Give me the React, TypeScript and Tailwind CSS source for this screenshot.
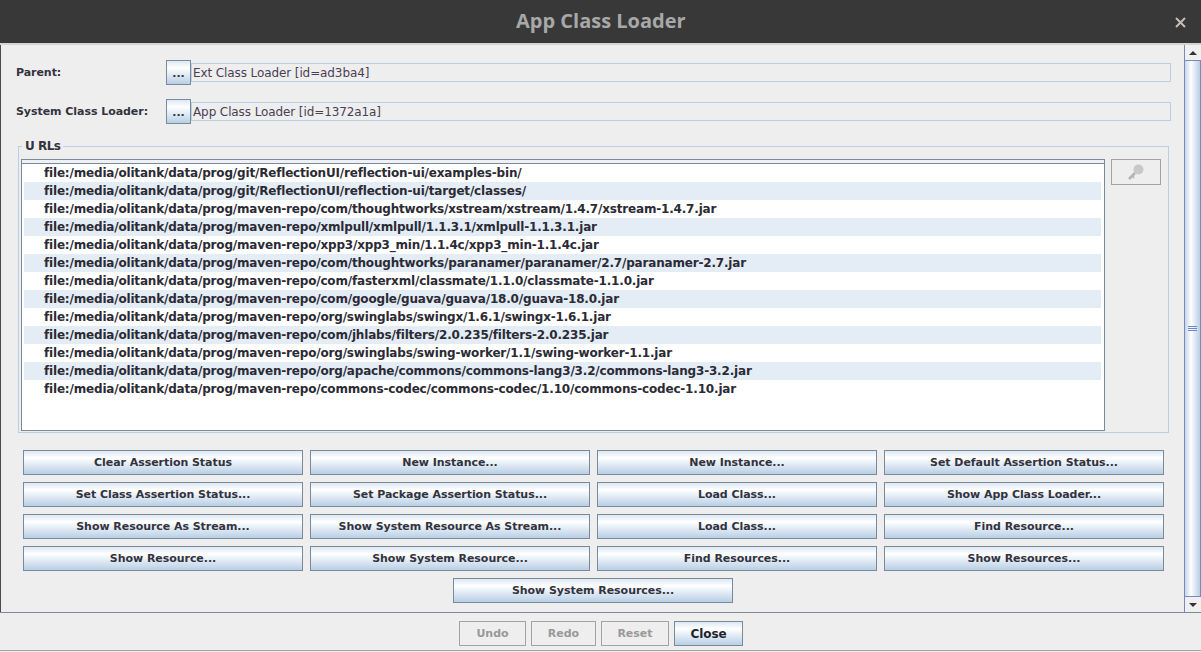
import React from "react";

const urls = [
  "file:/media/olitank/data/prog/git/ReflectionUI/reflection-ui/examples-bin/",
  "file:/media/olitank/data/prog/git/ReflectionUI/reflection-ui/target/classes/",
  "file:/media/olitank/data/prog/maven-repo/com/thoughtworks/xstream/xstream/1.4.7/xstream-1.4.7.jar",
  "file:/media/olitank/data/prog/maven-repo/xmlpull/xmlpull/1.1.3.1/xmlpull-1.1.3.1.jar",
  "file:/media/olitank/data/prog/maven-repo/xpp3/xpp3_min/1.1.4c/xpp3_min-1.1.4c.jar",
  "file:/media/olitank/data/prog/maven-repo/com/thoughtworks/paranamer/paranamer/2.7/paranamer-2.7.jar",
  "file:/media/olitank/data/prog/maven-repo/com/fasterxml/classmate/1.1.0/classmate-1.1.0.jar",
  "file:/media/olitank/data/prog/maven-repo/com/google/guava/guava/18.0/guava-18.0.jar",
  "file:/media/olitank/data/prog/maven-repo/org/swinglabs/swingx/1.6.1/swingx-1.6.1.jar",
  "file:/media/olitank/data/prog/maven-repo/com/jhlabs/filters/2.0.235/filters-2.0.235.jar",
  "file:/media/olitank/data/prog/maven-repo/org/swinglabs/swing-worker/1.1/swing-worker-1.1.jar",
  "file:/media/olitank/data/prog/maven-repo/org/apache/commons/commons-lang3/3.2/commons-lang3-3.2.jar",
  "file:/media/olitank/data/prog/maven-repo/commons-codec/commons-codec/1.10/commons-codec-1.10.jar",
];

const buttons = [
  "Clear Assertion Status", "New Instance...", "New Instance...", "Set Default Assertion Status...",
  "Set Class Assertion Status...", "Set Package Assertion Status...", "Load Class...", "Show App Class Loader...",
  "Show Resource As Stream...", "Show System Resource As Stream...", "Load Class...", "Find Resource...",
  "Show Resource...", "Show System Resource...", "Find Resources...", "Show Resources...",
];

function Btn({ label }: { label: string }) {
  return (
    <button className="h-[25px] w-[280px] border border-[#7a8a99] bg-gradient-to-b from-[#dde8f3] via-[#ffffff] via-[30%] to-[#b8cfe5] text-[11px] font-bold leading-none tracking-[-0.05px] text-[#333340]">
      {label}
    </button>
  );
}

function Row({ label, value }: { label: string; value: string }) {
  return (
    <div className="flex h-[25px] items-center">
      <div className="w-[165px] whitespace-nowrap pl-[15px] pt-[2px] text-[11px] font-bold tracking-[-0.05px] text-[#333340]">{label}</div>
      <button className="h-[25px] w-[25px] shrink-0 border border-[#7a8a99] bg-gradient-to-b from-[#dde8f3] via-[#ffffff] via-[30%] to-[#b8cfe5] pt-[2px] text-[11px] font-bold leading-none text-[#333340]">
        ...
      </button>
      <div className="flex h-[19px] w-[980px] items-center border border-[#b8cfe5] pl-[1px] text-[12px] tracking-[-0.1px] text-[#4a3f55]">
        {value}
      </div>
    </div>
  );
}

function Foot({ label, w, off }: { label: string; w: string; off?: boolean }) {
  return off ? (
    <button className={`h-[25px] ${w} border border-[#a3a3a3] pt-[2px] text-[11px] font-bold text-[#999999]`}>{label}</button>
  ) : (
    <button className={`h-[25px] ${w} border border-[#7a8a99] bg-gradient-to-b from-[#dde8f3] via-[#ffffff] via-[30%] to-[#b8cfe5] text-[12px] font-bold tracking-[-0.1px] text-[#1f2430]`}>{label}</button>
  );
}

export default function App() {
  return (
    <div
      className="flex h-[652px] w-[1201px] flex-col overflow-hidden bg-[#eeeeee]"
      style={{ fontFamily: '"DejaVu Sans", sans-serif' }}
    >
      <div className="flex h-[43px] shrink-0 items-center bg-[#383838] pb-[2px] pl-[516px] pr-[15px]">
        <div className="flex-1 text-[20px] font-bold text-[#a8a8a8]" style={{ fontFamily: '"Open Sans", sans-serif' }}>
          App Class Loader
        </div>
        <svg width="11" height="11" viewBox="0 0 11 11" className="mt-[3px]">
          <path d="M1 1 L10 10 M10 1 L1 10" stroke="#c4bdb8" strokeWidth="2" />
        </svg>
      </div>
      <div className="h-[2px] shrink-0 bg-[#d4d4d4]" />

      <div className="flex h-[567px] shrink-0 border-l border-l-[#4a4a4a]">
        <div className="w-[1183px] shrink-0">
          <div className="flex flex-col gap-[14px] pt-[15px]">
            <Row label="Parent:" value="Ext Class Loader [id=ad3ba4]" />
            <Row label="System Class Loader:" value="App Class Loader [id=1372a1a]" />
          </div>

          <div className="relative ml-[17px] mt-[22px] flex h-[287px] w-[1151px] gap-[6px] border border-[#b8cfe5] pl-[2px] pt-[12px]">
            <div className="absolute left-[3px] top-[-8px] bg-[#eeeeee] px-[3px] text-[12px] font-bold leading-[15px] tracking-[-0.5px] text-[#333340]">
              U RLs
            </div>
            <div className="h-[272px] w-[1084px] shrink-0 border border-[#7a8a99] bg-white">
              <div className="h-[4px] border-b border-[#7a8a99] bg-[#eef1f5]" />
              <div className="pl-[2px]">
                {urls.map((u, i) => (
                  <div
                    key={i}
                    className={`h-[18px] w-[1077px] whitespace-nowrap pl-[20px] text-[12px] font-bold leading-[18px] tracking-[-0.18px] text-[#2b2b35] ${
                      i % 2 === 1 ? "bg-[#e4ecf5]" : "bg-white"
                    }`}
                  >
                    {u}
                  </div>
                ))}
              </div>
            </div>
            <button className="flex h-[26px] w-[50px] shrink-0 items-center justify-center border border-[#a3a3a3]">
              <svg width="18" height="18" viewBox="0 0 18 18">
                <circle cx="11.5" cy="6.5" r="5" fill="#c8c8c8" />
                <path d="M8 10 L2 16" stroke="#b4b4b4" strokeWidth="2.5" />
                <path d="M5 12 L7 15" stroke="#b4b4b4" strokeWidth="1.5" />
              </svg>
            </button>
          </div>

          <div className="ml-[22px] mt-[17px] grid w-[1141px] grid-cols-[repeat(4,280px)] gap-x-[7px] gap-y-[7px]">
            {buttons.map((b, i) => (
              <Btn key={i} label={b} />
            ))}
          </div>
          <div className="ml-[452px] mt-[7px] flex">
            <Btn label="Show System Resources..." />
          </div>
        </div>

        <div className="flex w-[17px] shrink-0 flex-col border-l border-[#7a8ab8]">
          <div className="flex h-[16px] shrink-0 items-center justify-center border-b border-[#7a8ab8] bg-[#f0f0f0]">
            <div className="h-0 w-0 border-x-[4px] border-b-[4px] border-x-transparent border-b-[#333333]" />
          </div>
          <div className="flex flex-1 items-center justify-center border-r border-[#7a8ab8] bg-gradient-to-r from-[#c4d6ea] via-[#ffffff] via-[40%] to-[#b8cfe5]">
            <div className="flex w-[9px] flex-col gap-[1px]">
              <div className="h-[1px] bg-[#6a8ac8]" />
              <div className="h-[1px] bg-[#6a8ac8]" />
              <div className="h-[1px] bg-[#6a8ac8]" />
            </div>
          </div>
          <div className="flex h-[16px] shrink-0 items-center justify-center border-t border-[#7a8ab8] bg-[#f0f0f0]">
            <div className="h-0 w-0 border-x-[4px] border-t-[4px] border-x-transparent border-t-[#333333]" />
          </div>
        </div>
      </div>

      <div className="h-[1px] shrink-0 bg-[#7a8a99]" />
      <div className="flex h-[38px] shrink-0 items-start justify-center gap-[5px] border-b border-[#a3a3a3] pl-[1px] pt-[8px]">
        <Foot label="Undo" w="w-[67px]" off />
        <Foot label="Redo" w="w-[65px]" off />
        <Foot label="Reset" w="w-[68px]" off />
        <Foot label="Close" w="w-[69px]" />
      </div>
    </div>
  );
}
